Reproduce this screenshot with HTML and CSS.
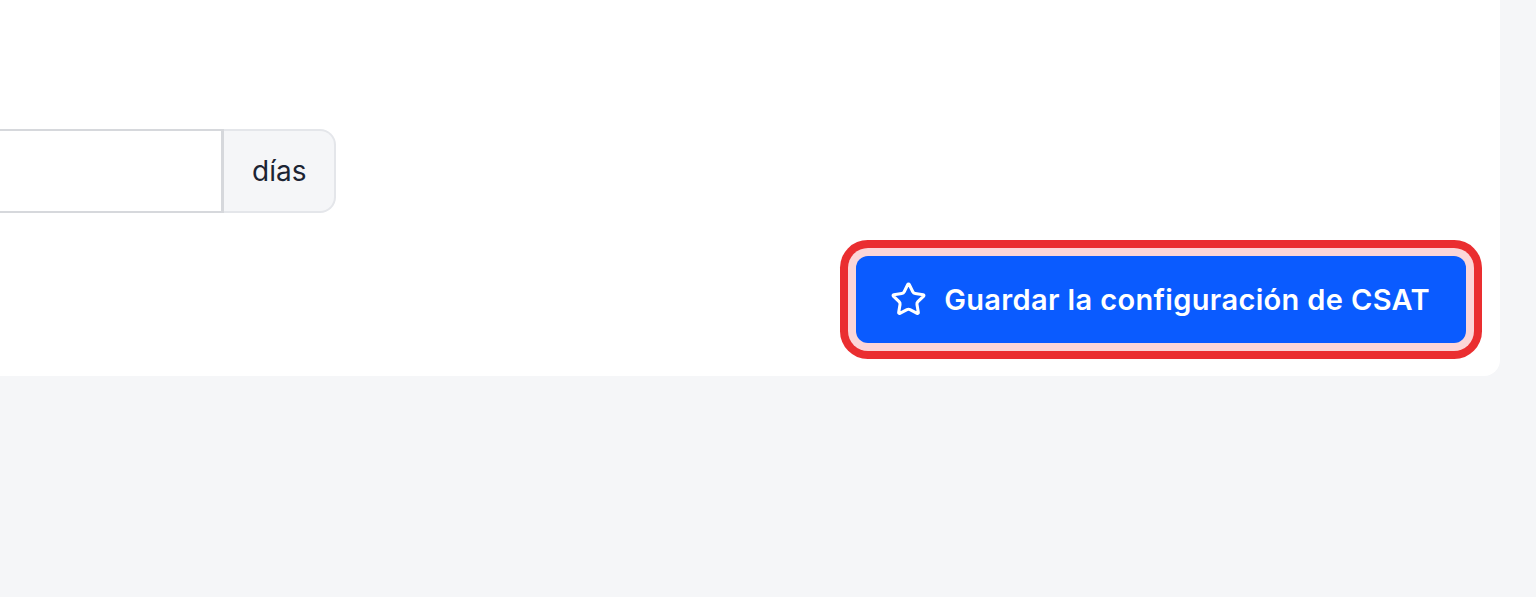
FILE: index.html
```html
<!DOCTYPE html>
<html lang="es">
<head>
<meta charset="utf-8">
<title>CSAT</title>
<link rel="stylesheet" href="styles.css">
</head>
<body>
<div class="card">
  <div class="field">
    <div class="input-group">
      <input class="input" type="text" value="">
      <span class="addon">días</span>
    </div>
  </div>
  <div class="actions">
    <button class="btn" type="button">
      <svg class="icon" viewBox="0 0 24 24" fill="none" stroke="currentColor" stroke-width="2" stroke-linecap="round" stroke-linejoin="round"><path d="M11.525 2.295a.53.53 0 0 1 .95 0l2.31 4.679a2.123 2.123 0 0 0 1.595 1.16l5.166.756a.53.53 0 0 1 .294.904l-3.736 3.638a2.123 2.123 0 0 0-.611 1.878l.882 5.14a.53.53 0 0 1-.771.56l-4.618-2.428a2.122 2.122 0 0 0-1.973 0L6.396 21.01a.53.53 0 0 1-.77-.56l.881-5.139a2.122 2.122 0 0 0-.611-1.879L2.16 9.795a.53.53 0 0 1 .294-.906l5.165-.755a2.122 2.122 0 0 0 1.597-1.16z"/></svg>
      <span>Guardar la configuración de CSAT</span>
    </button>
  </div>
</div>
</body>
</html>
```
FILE: styles.css
```css
html, body {
  margin: 0;
  padding: 0;
  background: #f5f6f8;
  font-family: Inter, "Liberation Sans", sans-serif;
}
.card {
  background: #ffffff;
  margin: -40px 36px 0 -100px;
  padding: 169px 34px 33px 0;
  border-radius: 16px;
  display: flex;
  flex-direction: column;
  gap: 43px;
}
.field {
  display: flex;
}
.input-group {
  display: flex;
  height: 84px;
}
.input {
  width: 324px;
  height: 84px;
  box-sizing: border-box;
  border: 2px solid #d6d8dc;
  border-right-width: 3px;
  border-radius: 12px 0 0 12px;
  background: #ffffff;
  margin: 0;
  padding: 0 24px;
  font: inherit;
  outline: none;
}
.addon {
  display: flex;
  align-items: center;
  box-sizing: border-box;
  height: 84px;
  padding: 0 28px;
  background: #f5f6f8;
  border: 2px solid #e4e6ea;
  border-left: none;
  border-radius: 0 16px 16px 0;
  font-size: 28px;
  color: #1c2433;
}
.actions {
  display: flex;
  justify-content: flex-end;
}
.btn {
  display: flex;
  align-items: center;
  gap: 17px;
  height: 87px;
  padding: 0 36px 0 34px;
  background: #0a5bff;
  color: #ffffff;
  border: none;
  border-radius: 12px;
  font-family: Inter, "Liberation Sans", sans-serif;
  font-size: 29px;
  font-weight: 600;
  letter-spacing: 0.35px;
  box-shadow: 0 0 0 8px #fcd6d8, 0 0 0 16px #ea2e30;
  cursor: pointer;
}
.icon {
  width: 37px;
  height: 37px;
  flex: none;
}
```
